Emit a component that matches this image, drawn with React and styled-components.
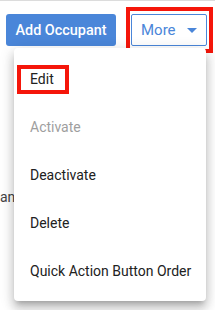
import React from "react"
import styled, { createGlobalStyle } from "styled-components"

const GlobalStyle = createGlobalStyle`
  html, body {
    margin: 0;
    padding: 0;
    background: #ffffff;
    font-family: Roboto, "Liberation Sans", Arial, sans-serif;
  }
  * { box-sizing: border-box; }
`

const Page = styled.div`
  position: relative;
  width: 215px;
  height: 310px;
  overflow: hidden;
  border-top: 1px solid #dcdcdc;
`

const Toolbar = styled.div`
  display: flex;
  align-items: center;
  gap: 10px;
  padding: 6px 0 0 6px;
`

const PrimaryButton = styled.button`
  height: 32px;
  width: 110px;
  border: none;
  border-radius: 3px;
  background: #4a86d9;
  color: #ffffff;
  font-family: inherit;
  font-size: 14.4px;
  font-weight: 500;
  padding: 0;
`

const Annotation = styled.div`
  display: flex;
  border: 4px solid #f5160a;
  padding: ${props => props.$pad};
`

const OutlineButton = styled.button`
  height: 32px;
  width: 76px;
  display: flex;
  align-items: center;
  gap: 11px;
  padding: 0 0 0 9px;
  border: 1px solid #4a86d9;
  border-radius: 2px;
  background: #ffffff;
  color: #4a86d9;
  font-family: inherit;
  font-size: 15px;
  font-weight: 400;
`

const Caret = styled.span`
  width: 0;
  height: 0;
  border-left: 5px solid transparent;
  border-right: 5px solid transparent;
  border-top: 5px solid #4a86d9;
`

const Content = styled.div`
  padding: 136px 0 0 0;
  font-size: 14px;
  color: #444;
`

const Menu = styled.ul`
  position: absolute;
  left: 14px;
  top: 47px;
  width: 192px;
  margin: 0;
  padding: 7px 0 6px;
  list-style: none;
  background: #ffffff;
  border-radius: 4px;
  box-shadow: 0 5px 5px -3px rgba(0, 0, 0, 0.2),
    0 8px 10px 1px rgba(0, 0, 0, 0.14), 0 3px 14px 2px rgba(0, 0, 0, 0.12);
`

const Item = styled.li`
  height: 48px;
  display: flex;
  align-items: center;
  padding-left: 16px;
  font-size: 14px;
  white-space: nowrap;
  color: ${props => (props.$disabled ? "#9e9e9e" : "#212121")};
`

const Highlight = styled.span`
  display: inline-flex;
  align-items: center;
  height: 29px;
  margin-left: -13px;
  padding: 0 11px 0 9px;
  border: 4px solid #f5160a;
`

const items = [
  { label: "Activate", disabled: true },
  { label: "Deactivate" },
  { label: "Delete" },
  { label: "Quick Action Button Order" },
]

const App = () => {
  return (
    <Page>
      <GlobalStyle />
      <Toolbar>
        <PrimaryButton>Add Occupant</PrimaryButton>
        <Annotation $pad="3px 2px 3px 1px">
          <OutlineButton>
            More
            <Caret />
          </OutlineButton>
        </Annotation>
      </Toolbar>

      <Content>an</Content>

      <Menu>
        <Item>
          <Highlight>Edit</Highlight>
        </Item>
        {items.map(item => (
          <Item key={item.label} $disabled={item.disabled}>
            {item.label}
          </Item>
        ))}
      </Menu>
    </Page>
  )
}

export default App
